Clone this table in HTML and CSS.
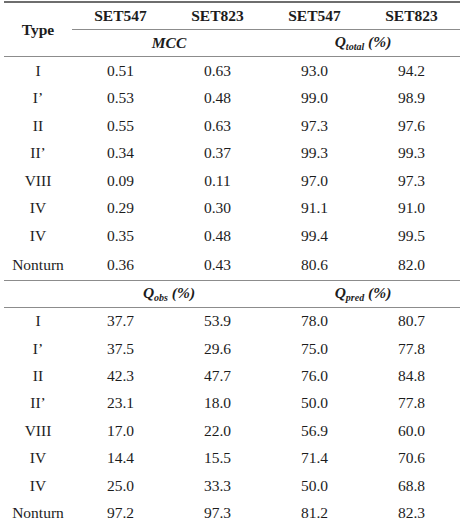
FILE: index.html
```html
<!DOCTYPE html>
<html>
<head>
<meta charset="utf-8">
<link rel="stylesheet" href="styles.css">
</head>
<body>
<table class="data">
  <colgroup>
    <col class="c-type"><col class="c-val"><col class="c-val"><col class="c-val"><col class="c-val">
  </colgroup>
  <thead>
    <tr class="h1">
      <th rowspan="2" class="type">Type</th>
      <th>SET547</th><th>SET823</th><th>SET547</th><th>SET823</th>
    </tr>
    <tr class="h2">
      <th colspan="2"><i>MCC</i></th>
      <th colspan="2"><i>Q<sub>total</sub> (%)</i></th>
    </tr>
  </thead>
  <tbody class="upper">
    <tr><td>I</td><td>0.51</td><td>0.63</td><td>93.0</td><td>94.2</td></tr>
    <tr><td>I’</td><td>0.53</td><td>0.48</td><td>99.0</td><td>98.9</td></tr>
    <tr><td>II</td><td>0.55</td><td>0.63</td><td>97.3</td><td>97.6</td></tr>
    <tr><td>II’</td><td>0.34</td><td>0.37</td><td>99.3</td><td>99.3</td></tr>
    <tr><td>VIII</td><td>0.09</td><td>0.11</td><td>97.0</td><td>97.3</td></tr>
    <tr><td>IV</td><td>0.29</td><td>0.30</td><td>91.1</td><td>91.0</td></tr>
    <tr><td>IV</td><td>0.35</td><td>0.48</td><td>99.4</td><td>99.5</td></tr>
    <tr class="last"><td>Nonturn</td><td>0.36</td><td>0.43</td><td>80.6</td><td>82.0</td></tr>
  </tbody>
  <tbody class="lower">
    <tr class="section">
      <th></th>
      <th colspan="2"><i>Q<sub>obs</sub> (%)</i></th>
      <th colspan="2"><i>Q<sub>pred</sub> (%)</i></th>
    </tr>
    <tr><td>I</td><td>37.7</td><td>53.9</td><td>78.0</td><td>80.7</td></tr>
    <tr><td>I’</td><td>37.5</td><td>29.6</td><td>75.0</td><td>77.8</td></tr>
    <tr><td>II</td><td>42.3</td><td>47.7</td><td>76.0</td><td>84.8</td></tr>
    <tr><td>II’</td><td>23.1</td><td>18.0</td><td>50.0</td><td>77.8</td></tr>
    <tr><td>VIII</td><td>17.0</td><td>22.0</td><td>56.9</td><td>60.0</td></tr>
    <tr><td>IV</td><td>14.4</td><td>15.5</td><td>71.4</td><td>70.6</td></tr>
    <tr><td>IV</td><td>25.0</td><td>33.3</td><td>50.0</td><td>68.8</td></tr>
    <tr><td>Nonturn</td><td>97.2</td><td>97.3</td><td>81.2</td><td>82.3</td></tr>
  </tbody>
</table>
</body>
</html>
```

FILE: styles.css
```css
html, body {
  margin: 0;
  padding: 0;
  background: #ffffff;
}

body {
  font-family: "Liberation Serif", "Times New Roman", serif;
  font-size: 15.5px;
  color: #1c1c1c;
}

.data {
  margin-left: 4px;
  margin-top: 1px;
  width: 456px;
  table-layout: fixed;
  border-collapse: collapse;
}

.c-type { width: 68px; }
.c-val { width: 97px; }

.data th,
.data td {
  padding: 0;
  text-align: center;
  vertical-align: middle;
  line-height: 18px;
}

.data th {
  font-weight: bold;
}

.data i {
  font-style: italic;
}

.data sub {
  font-size: 10px;
  vertical-align: baseline;
  position: relative;
  top: 3px;
}

.h1 th {
  height: 26px;
  border-top: 2px solid #6e6e6e;
  border-bottom: 1px solid #8c8c8c;
}

.h1 th.type {
  padding-top: 0;
}

.h2 th {
  height: 26px;
  border-bottom: 1px solid #8c8c8c;
}

.upper td {
  height: 27.5px;
}

.upper tr.last td {
  height: 30px;
  border-bottom: 1px solid #8c8c8c;
}

.section th {
  height: 26px;
  border-bottom: 1px solid #8c8c8c;
}

.lower td {
  height: 27.4px;
}
```
